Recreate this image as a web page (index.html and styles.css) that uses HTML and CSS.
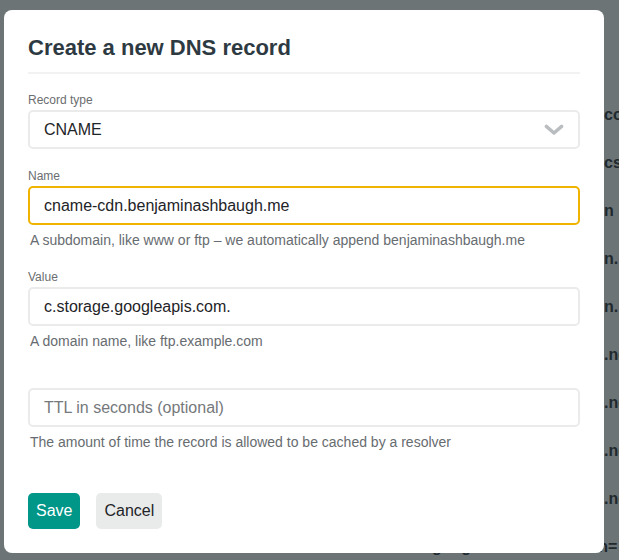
FILE: index.html
```
<!DOCTYPE html>
<html lang="en">
<head>
<meta charset="utf-8">
<title>Create a new DNS record</title>
<link rel="stylesheet" href="styles.css">
</head>
<body>
<div class="page">
  <div class="bg-rows">
    <div class="bg-row"><span class="bg-lead"></span><span>co</span></div>
    <div class="bg-row"><span class="bg-lead"></span><span>cs</span></div>
    <div class="bg-row"><span class="bg-lead"></span><span>n</span></div>
    <div class="bg-row"><span class="bg-lead"></span><span>n.</span></div>
    <div class="bg-row"><span class="bg-lead"></span><span>n.</span></div>
    <div class="bg-row"><span class="bg-lead"></span><span>.ne</span></div>
    <div class="bg-row"><span class="bg-lead"></span><span>.ne</span></div>
    <div class="bg-row"><span class="bg-lead"></span><span>.ne</span></div>
    <div class="bg-row"><span class="bg-lead"></span><span>.ne</span></div>
    <div class="bg-row"><span class="bg-lead bg-lead-wide"></span><span>google-site-verification=</span></div>
  </div>

  <div class="modal">
    <h2 class="modal-title">Create a new DNS record</h2>
    <div class="field">
      <div class="label">Record type</div>
      <div class="control select">
        <span>CNAME</span>
        <svg class="chevron" width="20" height="12" viewBox="0 0 20 12"><polyline points="2.5,2.5 10,9 17.5,2.5" fill="none" stroke="#b9bdc0" stroke-width="3.6" stroke-linecap="round" stroke-linejoin="round"/></svg>
      </div>
    </div>
    <div class="field">
      <div class="label">Name</div>
      <div class="control focused">cname-cdn.benjaminashbaugh.me</div>
      <div class="help">A subdomain, like www or ftp – we automatically append benjaminashbaugh.me</div>
    </div>
    <div class="field">
      <div class="label">Value</div>
      <div class="control">c.storage.googleapis.com.</div>
      <div class="help">A domain name, like ftp.example.com</div>
    </div>
    <div class="field">
      <div class="label"></div>
      <div class="control placeholder">TTL in seconds (optional)</div>
      <div class="help">The amount of time the record is allowed to be cached by a resolver</div>
    </div>
    <div class="actions">
      <button class="btn btn-primary" type="button">Save</button>
      <button class="btn btn-light" type="button">Cancel</button>
    </div>
  </div>
</div>
</body>
</html>
```
FILE: styles.css
```
* { box-sizing: border-box; }
html, body { margin: 0; padding: 0; }
body {
  width: 619px;
  height: 560px;
  overflow: hidden;
  background: #6c7476;
  font-family: "Liberation Sans", Arial, sans-serif;
}
.page {
  position: relative;
  width: 619px;
  height: 560px;
}
.bg-rows {
  padding-top: 91px;
  color: #1f292e;
  font-weight: bold;
  font-size: 16px;
}
.bg-row {
  display: flex;
  height: 48px;
  line-height: 48px;
  white-space: nowrap;
}
.bg-lead { flex: 0 0 604px; }
.bg-lead-wide { flex: 0 0 432px; }

.modal {
  position: absolute;
  left: 4px;
  top: 10px;
  width: 600px;
  background: #fff;
  border-radius: 8px;
  padding: 24px 24px 24px;
}
.modal-title {
  margin: 0;
  font-size: 22px;
  line-height: 28px;
  font-weight: bold;
  color: #2e3a42;
  padding-bottom: 10px;
  border-bottom: 2px solid #f2f2f2;
}
.field { margin-top: 19px; }
.modal-title + .field { margin-top: 18px; }
.label {
  height: 16px;
  font-size: 12px;
  line-height: 16px;
  color: #6b6e70;
  margin-bottom: 2px;
}
.control {
  height: 39px;
  border: 2px solid #ebebeb;
  border-radius: 5px;
  padding: 0 14px;
  display: flex;
  align-items: center;
  font-size: 16px;
  color: #1e2427;
}
.control.focused { border-color: #f0b400; }
.control.placeholder { color: #75797c; }
.select { justify-content: space-between; padding-right: 14px; }
.chevron { display: block; }
.help {
  margin-top: 5px;
  padding-left: 2px;
  font-size: 14px;
  line-height: 20px;
  color: #676c70;
}
.actions {
  margin-top: 41px;
  display: flex;
  gap: 16px;
}
.btn {
  height: 36px;
  padding: 0 8px;
  border: none;
  border-radius: 5px;
  font-family: "Liberation Sans", Arial, sans-serif;
  font-size: 16px;
  line-height: 36px;
  cursor: pointer;
}
.btn-primary { background: #009688; color: #fff; }
.btn-light { background: #e9ebeb; color: #1e2427; }
```
